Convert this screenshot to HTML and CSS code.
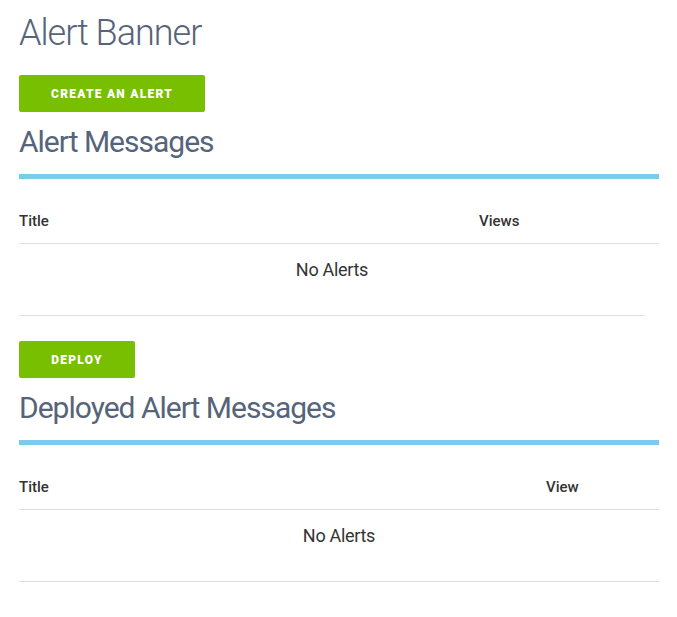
FILE: index.html
```html
<!DOCTYPE html>
<html>
<head>
<meta charset="utf-8">
<link rel="stylesheet" href="styles.css">
</head>
<body>
<div class="page">
  <h1 class="page-title">Alert Banner</h1>
  <section class="section">
    <button class="btn btn-wide">CREATE AN ALERT</button>
    <h2 class="section-title">Alert Messages</h2>
    <table class="table table-narrow-foot">
      <thead>
        <tr><th class="col-title col-title-a">Title</th><th class="col-views">Views</th></tr>
      </thead>
      <tbody>
        <tr><td colspan="2" class="empty">No Alerts</td></tr>
      </tbody>
    </table>
    <div class="foot-line foot-line-short"></div>
  </section>
  <section class="section">
    <button class="btn btn-deploy">DEPLOY</button>
    <h2 class="section-title">Deployed Alert Messages</h2>
    <table class="table">
      <thead>
        <tr><th class="col-title col-title-b">Title</th><th class="col-views">View</th></tr>
      </thead>
      <tbody>
        <tr><td colspan="2" class="empty">No Alerts</td></tr>
      </tbody>
    </table>
    <div class="foot-line"></div>
  </section>
</div>
</body>
</html>
```
FILE: styles.css
```css
* { box-sizing: border-box; }
html, body { margin: 0; padding: 0; background: #fff; }
body { font-family: Roboto, "Liberation Sans", sans-serif; color: #333; }
.page { padding: 12px 18px 0 19px; width: 677px; }
.page-title {
  margin: 0;
  font-size: 36px;
  line-height: 43px;
  font-weight: 300;
  letter-spacing: -1px;
  color: #56647a;
}
.section { display: flex; flex-direction: column; align-items: flex-start; }
.section + .section { margin-top: 25px; }
.page-title + .section { margin-top: 20px; }
.btn {
  height: 37px;
  border: none;
  border-radius: 2px;
  background: #77bf00;
  color: #fff;
  font-family: Roboto, "Liberation Sans", sans-serif;
  font-size: 12px;
  font-weight: 900;
  letter-spacing: 1.25px;
  padding: 1px 0 0 0;
  cursor: pointer;
}
.btn-wide { width: 186px; }
.btn-deploy { width: 116px; }
.section-title {
  align-self: stretch;
  margin: 12px 0 0 0;
  font-size: 30px;
  line-height: 36px;
  font-weight: 400;
  letter-spacing: -1px;
  color: #56647a;
  padding-bottom: 14px;
  border-bottom: 5px solid #7bcbea;
}
.table {
  width: 640px;
  margin-top: 20px;
  border-collapse: collapse;
}
.table th {
  text-align: left;
  font-size: 15px;
  font-weight: 500;
  line-height: 22px;
  padding: 11px 0;
  border-bottom: 1px solid #e0e0e0;
  color: #333;
}
.col-title-a { width: 460px; }
.col-title-b { width: 527px; }
.empty {
  text-align: center;
  font-size: 18px;
  line-height: 22px;
  letter-spacing: -0.3px;
  padding: 15px 0 34px;
  color: #333;
}
.table-narrow-foot .empty { padding-right: 14px; }
.foot-line { width: 640px; height: 1px; background: #e0e0e0; }
.foot-line-short { width: 626px; }
```
